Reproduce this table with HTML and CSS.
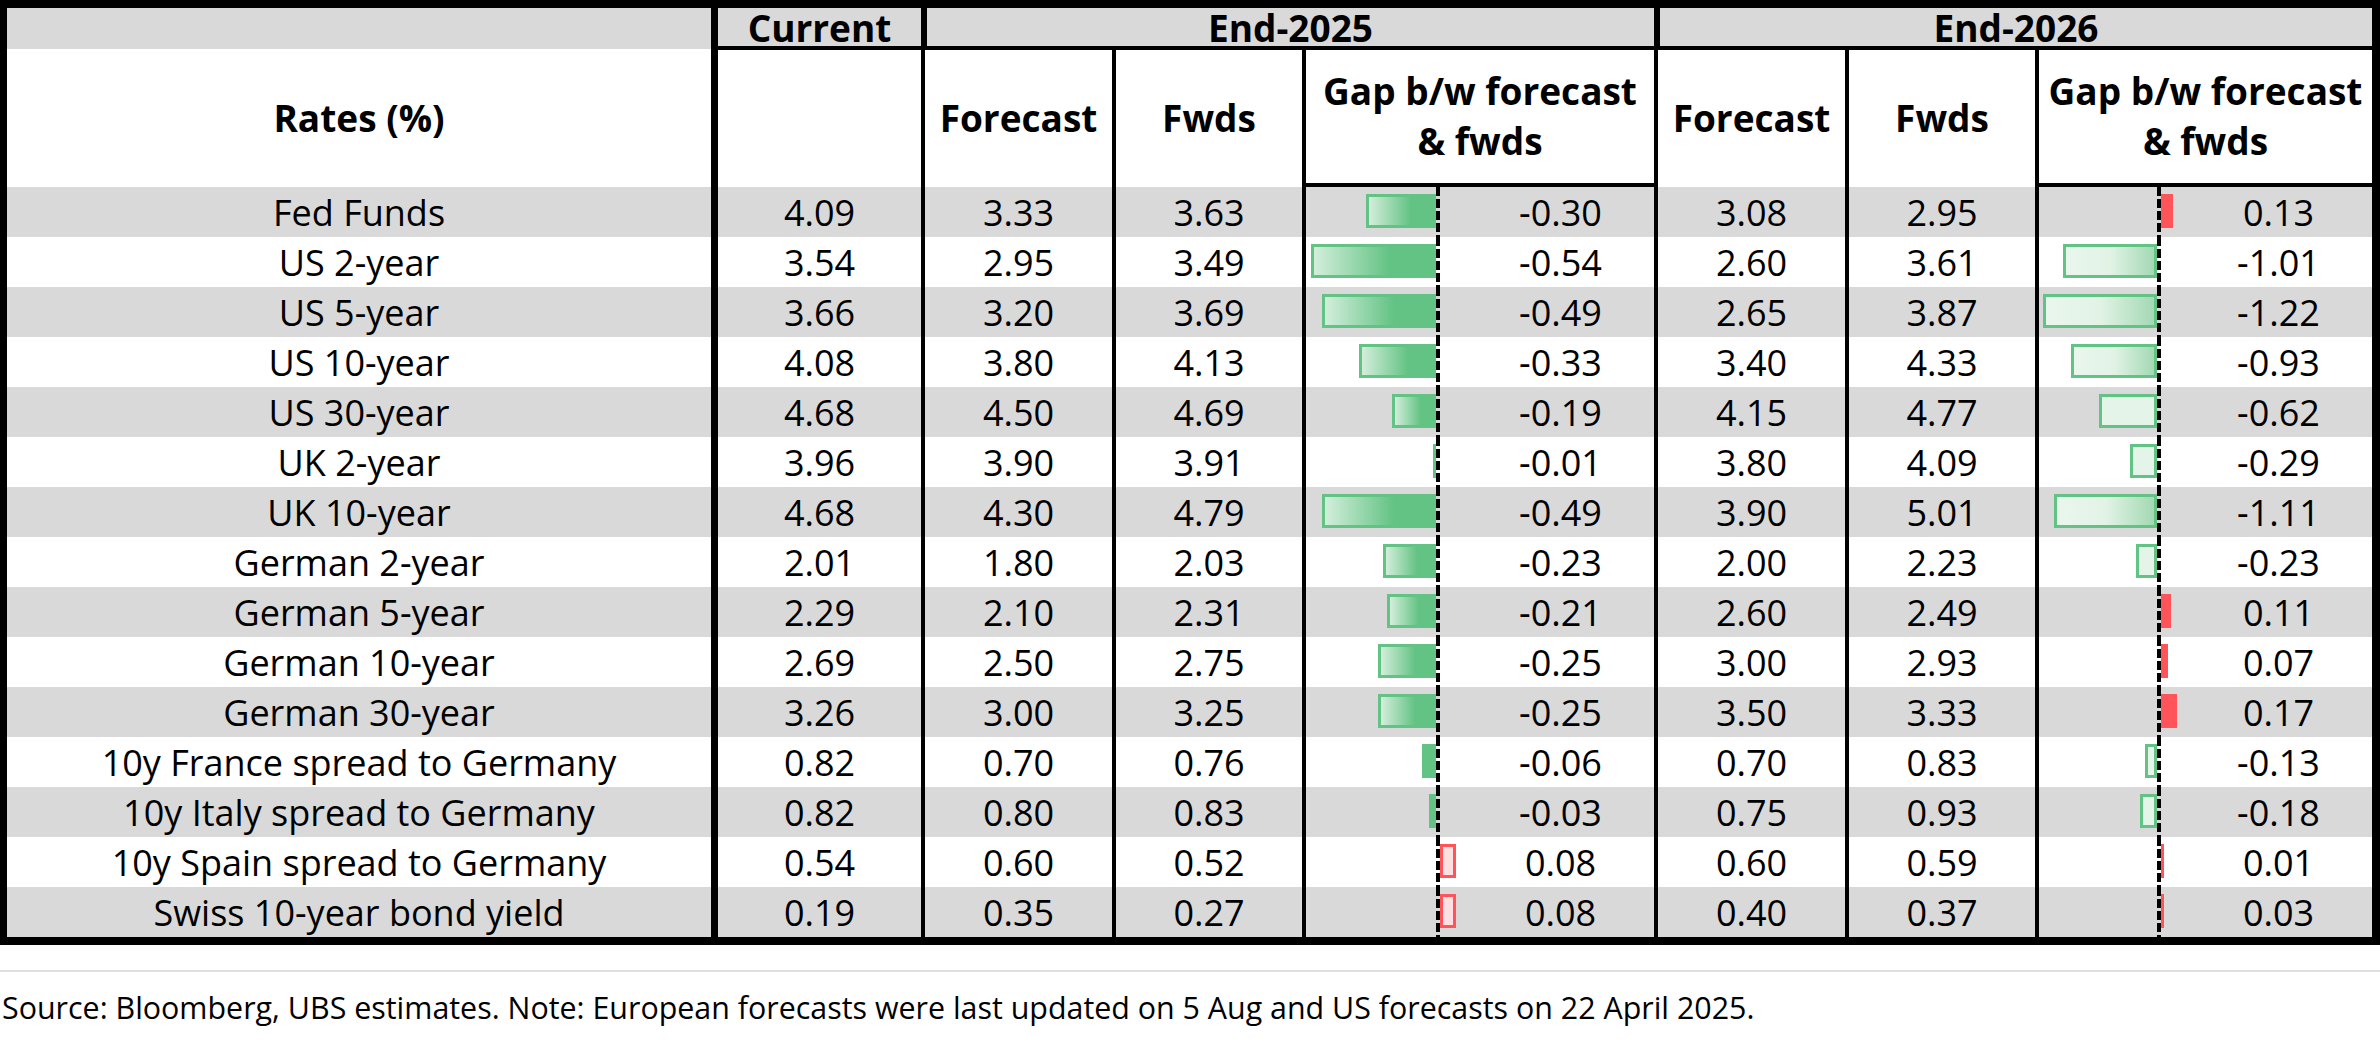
FILE: index.html
```html
<!DOCTYPE html>
<html lang="en">
<head>
<meta charset="utf-8">
<title>Rates forecasts</title>
<link rel="stylesheet" href="styles.css">
</head>
<body>
<div class="frame">
  <div class="row hrow1">
    <div class="hc blank"></div>
    <div class="hc">Current</div>
    <div class="hc grp">End-2025</div>
    <div class="hc grp">End-2026</div>
  </div>
  <div class="row hrow2">
    <div class="h2c first">Rates (%)</div>
    <div class="h2c cur"></div>
    <div class="h2c">Forecast</div>
    <div class="h2c">Fwds</div>
    <div class="h2c gaph">Gap b/w forecast<br>&amp; fwds</div>
    <div class="h2c">Forecast</div>
    <div class="h2c">Fwds</div>
    <div class="h2c gaph">Gap b/w forecast<br>&amp; fwds</div>
  </div>

  <div class="row drow alt">
    <div class="dc first">Fed Funds</div><div class="dc cur">4.09</div><div class="dc">3.33</div><div class="dc">3.63</div>
    <div class="gapc"><div class="neg"><div class="bar g25" style="width:70px"></div></div><div class="axis"></div><div class="pos"></div><div class="val">-0.30</div></div>
    <div class="dc">3.08</div><div class="dc">2.95</div>
    <div class="gapc y26"><div class="neg"></div><div class="axis"></div><div class="pos"><div class="bar r26" style="width:12px"></div></div><div class="val">0.13</div></div>
  </div>
  <div class="row drow">
    <div class="dc first">US 2-year</div><div class="dc cur">3.54</div><div class="dc">2.95</div><div class="dc">3.49</div>
    <div class="gapc"><div class="neg"><div class="bar g25" style="width:125px"></div></div><div class="axis"></div><div class="pos"></div><div class="val">-0.54</div></div>
    <div class="dc">2.60</div><div class="dc">3.61</div>
    <div class="gapc y26"><div class="neg"><div class="bar g26 deep" style="width:94px"></div></div><div class="axis"></div><div class="pos"></div><div class="val">-1.01</div></div>
  </div>
  <div class="row drow alt">
    <div class="dc first">US 5-year</div><div class="dc cur">3.66</div><div class="dc">3.20</div><div class="dc">3.69</div>
    <div class="gapc"><div class="neg"><div class="bar g25" style="width:114px"></div></div><div class="axis"></div><div class="pos"></div><div class="val">-0.49</div></div>
    <div class="dc">2.65</div><div class="dc">3.87</div>
    <div class="gapc y26"><div class="neg"><div class="bar g26 deep" style="width:114px"></div></div><div class="axis"></div><div class="pos"></div><div class="val">-1.22</div></div>
  </div>
  <div class="row drow">
    <div class="dc first">US 10-year</div><div class="dc cur">4.08</div><div class="dc">3.80</div><div class="dc">4.13</div>
    <div class="gapc"><div class="neg"><div class="bar g25" style="width:77px"></div></div><div class="axis"></div><div class="pos"></div><div class="val">-0.33</div></div>
    <div class="dc">3.40</div><div class="dc">4.33</div>
    <div class="gapc y26"><div class="neg"><div class="bar g26 deep" style="width:86px"></div></div><div class="axis"></div><div class="pos"></div><div class="val">-0.93</div></div>
  </div>
  <div class="row drow alt">
    <div class="dc first">US 30-year</div><div class="dc cur">4.68</div><div class="dc">4.50</div><div class="dc">4.69</div>
    <div class="gapc"><div class="neg"><div class="bar g25" style="width:44px"></div></div><div class="axis"></div><div class="pos"></div><div class="val">-0.19</div></div>
    <div class="dc">4.15</div><div class="dc">4.77</div>
    <div class="gapc y26"><div class="neg"><div class="bar g26" style="width:58px"></div></div><div class="axis"></div><div class="pos"></div><div class="val">-0.62</div></div>
  </div>
  <div class="row drow">
    <div class="dc first">UK 2-year</div><div class="dc cur">3.96</div><div class="dc">3.90</div><div class="dc">3.91</div>
    <div class="gapc"><div class="neg"><div class="bar g25 solid" style="width:3px"></div></div><div class="axis"></div><div class="pos"></div><div class="val">-0.01</div></div>
    <div class="dc">3.80</div><div class="dc">4.09</div>
    <div class="gapc y26"><div class="neg"><div class="bar g26" style="width:27px"></div></div><div class="axis"></div><div class="pos"></div><div class="val">-0.29</div></div>
  </div>
  <div class="row drow alt">
    <div class="dc first">UK 10-year</div><div class="dc cur">4.68</div><div class="dc">4.30</div><div class="dc">4.79</div>
    <div class="gapc"><div class="neg"><div class="bar g25" style="width:114px"></div></div><div class="axis"></div><div class="pos"></div><div class="val">-0.49</div></div>
    <div class="dc">3.90</div><div class="dc">5.01</div>
    <div class="gapc y26"><div class="neg"><div class="bar g26 deep" style="width:103px"></div></div><div class="axis"></div><div class="pos"></div><div class="val">-1.11</div></div>
  </div>
  <div class="row drow">
    <div class="dc first">German 2-year</div><div class="dc cur">2.01</div><div class="dc">1.80</div><div class="dc">2.03</div>
    <div class="gapc"><div class="neg"><div class="bar g25" style="width:53px"></div></div><div class="axis"></div><div class="pos"></div><div class="val">-0.23</div></div>
    <div class="dc">2.00</div><div class="dc">2.23</div>
    <div class="gapc y26"><div class="neg"><div class="bar g26" style="width:21px"></div></div><div class="axis"></div><div class="pos"></div><div class="val">-0.23</div></div>
  </div>
  <div class="row drow alt">
    <div class="dc first">German 5-year</div><div class="dc cur">2.29</div><div class="dc">2.10</div><div class="dc">2.31</div>
    <div class="gapc"><div class="neg"><div class="bar g25" style="width:49px"></div></div><div class="axis"></div><div class="pos"></div><div class="val">-0.21</div></div>
    <div class="dc">2.60</div><div class="dc">2.49</div>
    <div class="gapc y26"><div class="neg"></div><div class="axis"></div><div class="pos"><div class="bar r26" style="width:10px"></div></div><div class="val">0.11</div></div>
  </div>
  <div class="row drow">
    <div class="dc first">German 10-year</div><div class="dc cur">2.69</div><div class="dc">2.50</div><div class="dc">2.75</div>
    <div class="gapc"><div class="neg"><div class="bar g25" style="width:58px"></div></div><div class="axis"></div><div class="pos"></div><div class="val">-0.25</div></div>
    <div class="dc">3.00</div><div class="dc">2.93</div>
    <div class="gapc y26"><div class="neg"></div><div class="axis"></div><div class="pos"><div class="bar r26" style="width:7px"></div></div><div class="val">0.07</div></div>
  </div>
  <div class="row drow alt">
    <div class="dc first">German 30-year</div><div class="dc cur">3.26</div><div class="dc">3.00</div><div class="dc">3.25</div>
    <div class="gapc"><div class="neg"><div class="bar g25" style="width:58px"></div></div><div class="axis"></div><div class="pos"></div><div class="val">-0.25</div></div>
    <div class="dc">3.50</div><div class="dc">3.33</div>
    <div class="gapc y26"><div class="neg"></div><div class="axis"></div><div class="pos"><div class="bar r26" style="width:16px"></div></div><div class="val">0.17</div></div>
  </div>
  <div class="row drow">
    <div class="dc first">10y France spread to Germany</div><div class="dc cur">0.82</div><div class="dc">0.70</div><div class="dc">0.76</div>
    <div class="gapc"><div class="neg"><div class="bar g25 solid" style="width:14px"></div></div><div class="axis"></div><div class="pos"></div><div class="val">-0.06</div></div>
    <div class="dc">0.70</div><div class="dc">0.83</div>
    <div class="gapc y26"><div class="neg"><div class="bar g26" style="width:12px"></div></div><div class="axis"></div><div class="pos"></div><div class="val">-0.13</div></div>
  </div>
  <div class="row drow alt">
    <div class="dc first">10y Italy spread to Germany</div><div class="dc cur">0.82</div><div class="dc">0.80</div><div class="dc">0.83</div>
    <div class="gapc"><div class="neg"><div class="bar g25 solid" style="width:7px"></div></div><div class="axis"></div><div class="pos"></div><div class="val">-0.03</div></div>
    <div class="dc">0.75</div><div class="dc">0.93</div>
    <div class="gapc y26"><div class="neg"><div class="bar g26" style="width:17px"></div></div><div class="axis"></div><div class="pos"></div><div class="val">-0.18</div></div>
  </div>
  <div class="row drow">
    <div class="dc first">10y Spain spread to Germany</div><div class="dc cur">0.54</div><div class="dc">0.60</div><div class="dc">0.52</div>
    <div class="gapc"><div class="neg"></div><div class="axis"></div><div class="pos"><div class="bar r25" style="width:16px"></div></div><div class="val">0.08</div></div>
    <div class="dc">0.60</div><div class="dc">0.59</div>
    <div class="gapc y26"><div class="neg"></div><div class="axis"></div><div class="pos"><div class="bar r26" style="width:3px"></div></div><div class="val">0.01</div></div>
  </div>
  <div class="row drow alt">
    <div class="dc first">Swiss 10-year bond yield</div><div class="dc cur">0.19</div><div class="dc">0.35</div><div class="dc">0.27</div>
    <div class="gapc"><div class="neg"></div><div class="axis"></div><div class="pos"><div class="bar r25" style="width:16px"></div></div><div class="val">0.08</div></div>
    <div class="dc">0.40</div><div class="dc">0.37</div>
    <div class="gapc y26"><div class="neg"></div><div class="axis"></div><div class="pos"><div class="bar r26" style="width:3px"></div></div><div class="val">0.03</div></div>
  </div>
</div>
<div class="rule"></div>
<p class="note">Source: Bloomberg, UBS estimates. Note: European forecasts were last updated on 5 Aug and US forecasts on 22 April 2025.</p>
</body>
</html>
```

FILE: styles.css
```css
* { box-sizing: border-box; }

body {
  margin: 0;
  background: #fff;
  color: #000;
  font-family: "Open Sans", "Noto Sans", sans-serif;
}

.frame {
  width: 2380px;
  border-style: solid;
  border-color: #000;
  border-width: 8px 8px 8px 7px;
}

.row {
  display: grid;
  grid-template-columns: 704px 210px 191px 190px 352px 191px 190px 337px;
}

/* header row 1 */
.hrow1 {
  height: 41px;
  background: #d9d9d9;
}
.hc {
  border-left: 7px solid #000;
  border-bottom: 4px solid #000;
  display: flex;
  align-items: center;
  justify-content: center;
  font-weight: 700;
  font-size: 37px;
  line-height: 37px;
  white-space: nowrap;
  padding-top: 1px;
}
.hc.blank { border: none; }
.hc.grp { grid-column: span 3; border-left-width: 6px; }

/* header row 2 */
.hrow2 { height: 138px; }
.h2c {
  border-left: 4px solid #000;
  display: flex;
  align-items: center;
  justify-content: center;
  text-align: center;
  font-weight: 700;
  font-size: 37px;
  line-height: 50px;
  white-space: nowrap;
}
.h2c.first { border-left: none; }
.h2c.cur { border-left-width: 7px; }
.h2c.gaph { border-bottom: 4px solid #000; }

/* data rows */
.drow { height: 50px; }
.drow.alt { background: #d9d9d9; }

.dc {
  border-left: 4px solid #000;
  display: flex;
  align-items: center;
  justify-content: center;
  font-size: 36px;
  line-height: 49px;
  white-space: nowrap;
}
.dc.first { border-left: none; }
.dc.cur { border-left-width: 7px; }

.gapc {
  border-left: 4px solid #000;
  display: grid;
  grid-template-columns: 130px 4px 1fr 187px;
}
.gapc.y26 { grid-template-columns: 118px 4px 1fr 187px; }

.neg {
  display: flex;
  justify-content: flex-end;
  align-items: center;
}
.pos {
  display: flex;
  align-items: center;
}
.axis {
  background: repeating-linear-gradient(to bottom, #000 0 9px, transparent 9px 12px);
}
.val {
  display: flex;
  align-items: center;
  justify-content: center;
  font-size: 36px;
  line-height: 49px;
  white-space: nowrap;
}

.bar { height: 34px; margin-top: -2px; }
.bar.g25 {
  border: 3px solid #63c384;
  border-right: none;
  background: linear-gradient(90deg, #d3eedb 0%, #63c384 62%);
}
.bar.g25.solid { border: none; background: #63c384; }
.bar.r25 {
  border: 3px solid #ff555a;
  background: #fcdfe1;
}
.bar.g26 {
  border: 3px solid #63c384;
  background: #e4f4e8;
}
.bar.g26.deep {
  background: linear-gradient(90deg, #e9f6ed 0%, #e2f3e6 50%, #a3d9b3 100%);
}
.bar.r26 { background: #ff555a; }

/* footer */
.rule {
  height: 2px;
  background: #dedede;
  margin-top: 25px;
}
.note {
  margin: 15px 0 0 2px;
  font-size: 30.4px;
  line-height: 41px;
  white-space: nowrap;
}
```
